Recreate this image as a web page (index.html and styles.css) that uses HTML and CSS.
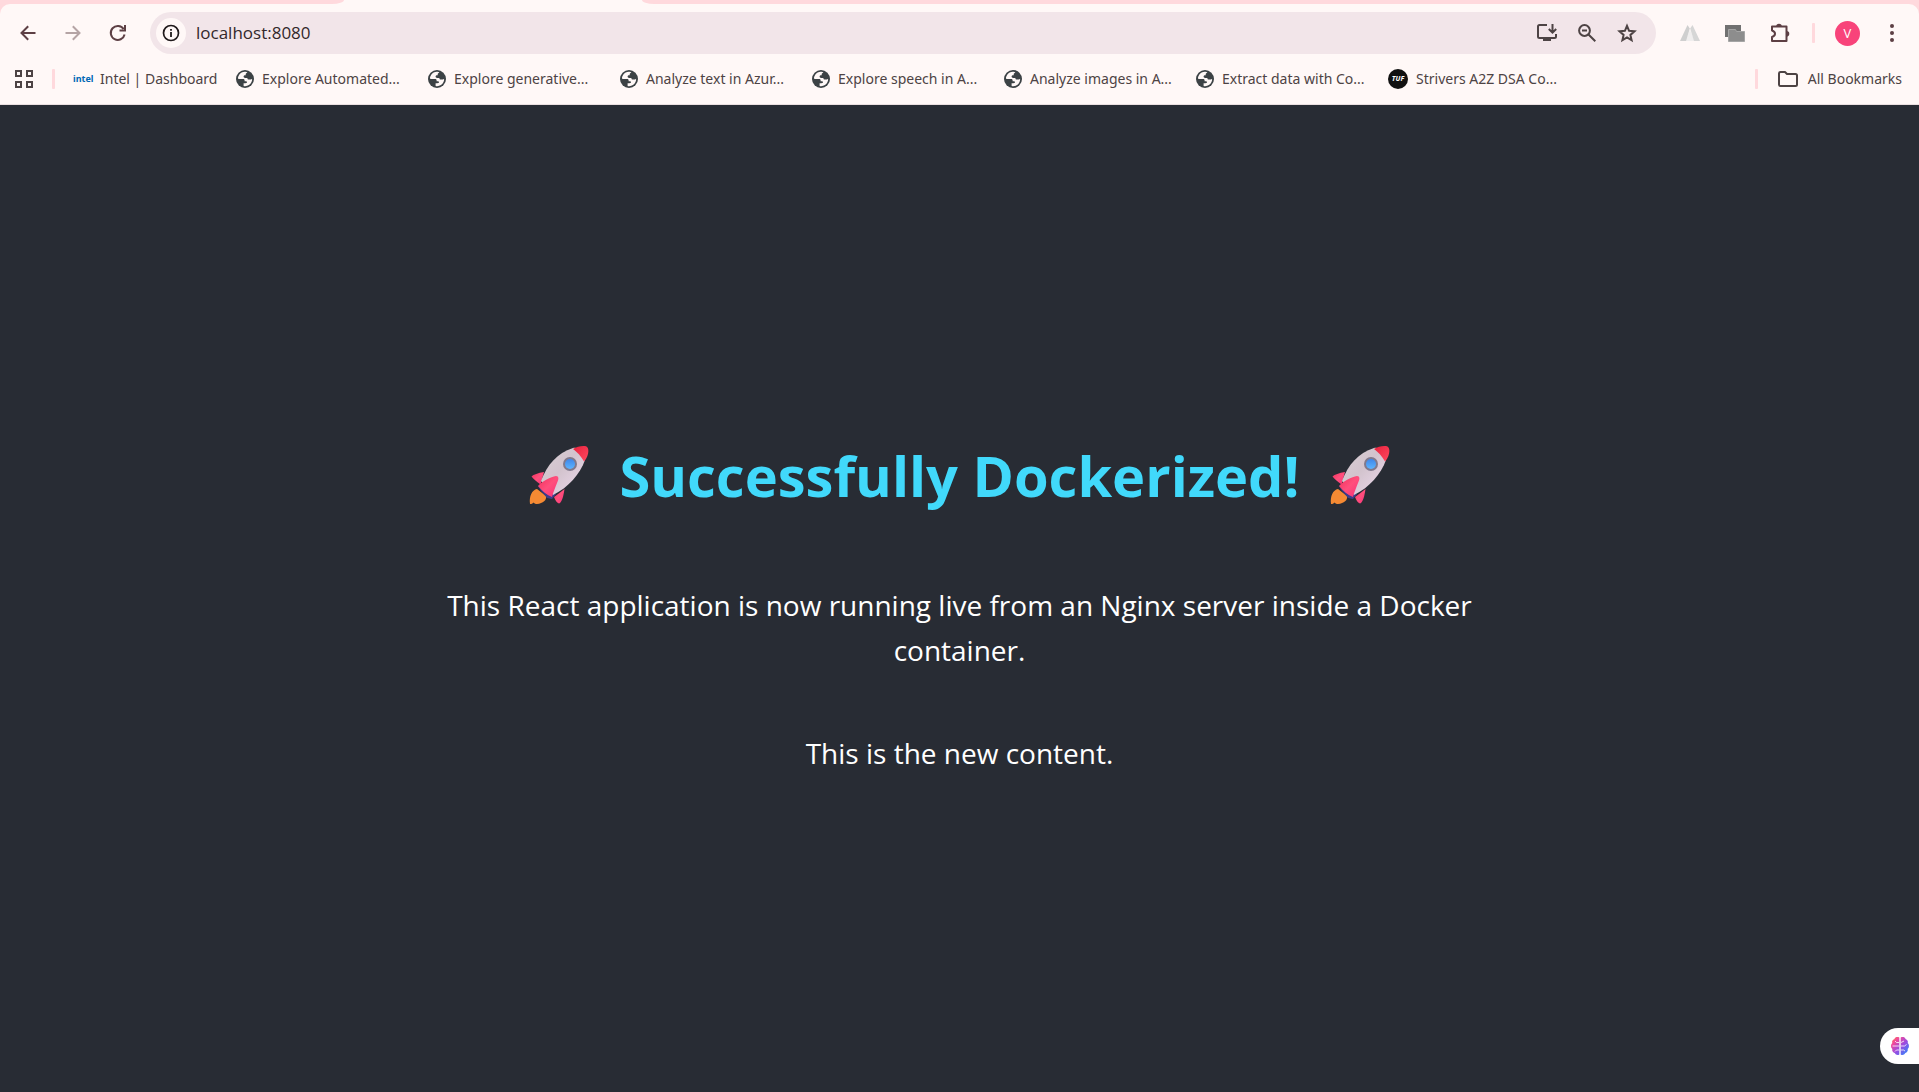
FILE: index.html
```html
<!DOCTYPE html>
<html lang="en">
<head>
<meta charset="utf-8">
<title>localhost:8080</title>
<meta name="viewport" content="width=device-width, initial-scale=1">
<link rel="stylesheet" href="styles.css">
</head>
<body>
<svg class="defs" width="0" height="0" aria-hidden="true">
  <defs>
    <linearGradient id="hull" x1="0" y1="0" x2="1" y2="1"><stop offset="0" stop-color="#d8d0d4"/><stop offset=".45" stop-color="#d2c3cd"/><stop offset="1" stop-color="#f0dcf0"/></linearGradient>
    <linearGradient id="fin" x1="0" y1="0" x2="1" y2="1"><stop offset="0" stop-color="#f0305c"/><stop offset=".5" stop-color="#ff4f7c"/><stop offset="1" stop-color="#f92f7a"/></linearGradient>
    <linearGradient id="nose" x1="0" y1="0" x2="1" y2="1"><stop offset="0" stop-color="#e8203c"/><stop offset="1" stop-color="#ff4a60"/></linearGradient>
    <linearGradient id="glass" x1="0" y1="0" x2="0" y2="1"><stop offset="0" stop-color="#3f86e8"/><stop offset="1" stop-color="#5db4ff"/></linearGradient>
    <linearGradient id="brain-fill" x1="0" y1="0" x2="1" y2="1"><stop offset="0" stop-color="#ff7a3c"/><stop offset=".25" stop-color="#f0489c"/><stop offset=".55" stop-color="#9a4be0"/><stop offset="1" stop-color="#1e90ff"/></linearGradient>
    <symbol id="globe" viewBox="0 0 18 18">
      <circle cx="9" cy="9" r="9" fill="#3c4245"/>
      <path fill="#fff8f7" d="M9.400 1.800C7 1.600 4.500 2.700 3.200 4.700L2.200 6.700c-.7 2 .1 2.300 1.800 2.300h3.200c.9 0 1.400.6 1.400 1.300v.9h1.500c.5 0 .8.300.8.800 0 .8-.7 1.200-1.500 1.200H7.600v2.800c3.300.7 6.600-.8 7.900-3.900.5-1.200.7-2.300.6-3.400-.8.900-1.900.9-3.100.9-1.200 0-1.600-.7-1.600-1.700H9.100c-.9 0-1.500-.5-1.500-1.300 0-1 .7-1.400 1.600-1.400h.5V4.200c0-.7.5-1.300 1.300-1.300h.4c-.4-.6-1.100-1-2-1.100z"/>
    </symbol>
    <symbol id="rocket" viewBox="0 0 60 60">
      <path fill="url(#fin)" d="M15 27C9 28 4.500 29.500 2.500 31.500c2 2.500 5.500 5.500 9 8z"/>
      <path fill="url(#fin)" d="M33 46l-8 6c1.500 3.500 3 6 5 6.500C33 57.500 34.500 51 35.500 44z"/>
      <path fill="#f58a33" d="M8 44c-5 1-8 7-7 15 2 0 3-.6 3.600-1.500.8 1 2 1.600 3.400 1.500C14 58.500 18 55 17 51z"/>
      <path fill="#3c3c8a" d="M9 41l3 5 6 7 5 1 4-5-12-11z"/>
      <path fill="url(#hull)" d="M12 36C18 20 28 8 44 3c5-1 12 3 12 12C51 29 40 42 24 50z"/>
      <path fill="url(#nose)" d="M44 4c4-2.500 10-3.500 13.500-2.500C60.500 3 60 11 55 16.500 52 11 48 7 44 4z"/>
      <circle cx="41" cy="19" r="7" fill="#80798c"/><circle cx="41" cy="19" r="5" fill="url(#glass)"/>
      <path fill="url(#fin)" d="M9 41c4-5 13-9 18-10 3 0 3 3 1 7-2 5-4 10-5 14-5-2-10-6-14-11z"/>
    </symbol>
  </defs>
</svg>

<header class="browser">
  <div class="tabstrip"><span class="tabs-before"></span><span class="tab-active"></span><span class="tabs-after"></span></div>
  <div class="chrome">
    <div class="toolbar">
      <nav class="history" aria-label="History">
        <button class="icon-btn" aria-label="Back"><svg width="16" height="16" viewBox="0 0 16 16"><path class="line" d="M15.500 8H2M8.200 1.300L1.500 8l6.700 6.700"/></svg></button>
        <button class="icon-btn faded" aria-label="Forward"><svg width="16" height="16" viewBox="0 0 16 16"><path class="line" d="M.5 8H14M7.800 1.300L14.500 8l-6.700 6.700"/></svg></button>
        <button class="icon-btn" aria-label="Reload"><svg width="18" height="18" viewBox="0 0 18 18"><path class="line" d="M15.600 10.500A7 7 0 1 1 14.600 5M10.500 6.500H16V1"/></svg></button>
      </nav>
      <div class="omnibox">
        <button class="site-info" aria-label="View site information"><svg width="18" height="18" viewBox="0 0 18 18"><circle cx="9" cy="9" r="7.500" fill="none" stroke="#201a1b" stroke-width="1.700"/><path fill="#201a1b" d="M8.100 8h1.800v5H8.100zM8.100 5h1.800v1.800H8.100z"/></svg></button>
        <input class="url" type="text" aria-label="Address" value="localhost:8080">
        <div class="omni-actions">
          <button class="icon-btn" aria-label="Install app"><svg width="22" height="20" viewBox="0 0 22 20"><path class="line dark" d="M11 2H3.500Q2 2 2 3.500v10Q2 15 3.500 15h15q1.500 0 1.500-1.500V11M16.500 1v8M12.800 6l3.700 3.700L20.200 6"/><path fill="#4d4344" d="M7 15h8v3H7z"/></svg></button>
          <button class="icon-btn" aria-label="Zoom"><svg width="18" height="18" viewBox="0 0 18 18"><circle class="line dark" cx="6.500" cy="6.500" r="5.400"/><path class="line dark" d="M10.500 10.500l6.800 6.800M4 6.500h5"/></svg></button>
          <button class="icon-btn" aria-label="Bookmark this tab"><svg width="20" height="20" viewBox="0 0 20 20"><path class="line dark" d="M10 2.800l2.100 5 5.400.5-4.100 3.600 1.200 5.300-4.600-2.800-4.600 2.800 1.200-5.300L2.500 8.300l5.400-.5z"/></svg></button>
        </div>
      </div>
      <div class="extensions">
        <button class="icon-btn" aria-label="Extension"><svg width="20" height="18" viewBox="0 0 20 18"><path fill="#f0eeee" d="M10 6l5 11H5z"/><path fill="#cfcfcf" d="M7.500 1l2.300 3.500L6 17H0z"/><path fill="#d6d6d6" d="M12.500 1l-2.300 3.500L14 17h6z"/></svg></button>
        <button class="icon-btn" aria-label="Extension"><svg width="20" height="18" viewBox="0 0 20 18"><path fill="#717171" d="M0 1h16v12H0z"/><path fill="#8d8d8d" stroke="#a5a5a5" d="M3.500 5.500h7l1 2h8v10h-16z"/></svg></button>
        <button class="icon-btn" aria-label="Extensions"><svg width="22" height="22" viewBox="0 0 22 22"><path class="line" d="M3 4.500h14.500V19H3v-4c4-1.300 4-5.200 0-6.500z" stroke-linejoin="round"/><path fill="#5d3f44" d="M7.200 4.500a2.800 2.800 0 0 1 5.600 0zM17.500 9a2.800 2.800 0 0 1 0 5.600z"/></svg></button>
      </div>
      <span class="divider"></span>
      <button class="avatar" aria-label="Profile">V</button>
      <button class="icon-btn" aria-label="Menu"><svg width="6" height="20" viewBox="0 0 6 20"><g fill="#5d3f44"><circle cx="3" cy="3" r="2"/><circle cx="3" cy="10" r="2"/><circle cx="3" cy="17" r="2"/></g></svg></button>
    </div>
    <nav class="bookmarks" aria-label="Bookmarks">
      <button class="icon-btn" aria-label="Apps"><svg width="18" height="18" viewBox="0 0 18 18"><path fill="none" stroke="#4d4344" stroke-width="2" d="M1 1h5v5H1zM12 1h5v5h-5zM1 12h5v5H1zM12 12h5v5h-5z"/></svg></button>
      <span class="divider"></span>
      <a class="bookmark short" href="#"><span class="intel">intel</span>Intel | Dashboard</a>
      <a class="bookmark" href="#"><svg width="18" height="18"><use href="#globe"/></svg>Explore Automated...</a>
      <a class="bookmark" href="#"><svg width="18" height="18"><use href="#globe"/></svg>Explore generative...</a>
      <a class="bookmark" href="#"><svg width="18" height="18"><use href="#globe"/></svg>Analyze text in Azur...</a>
      <a class="bookmark" href="#"><svg width="18" height="18"><use href="#globe"/></svg>Explore speech in A...</a>
      <a class="bookmark" href="#"><svg width="18" height="18"><use href="#globe"/></svg>Analyze images in A...</a>
      <a class="bookmark" href="#"><svg width="18" height="18"><use href="#globe"/></svg>Extract data with Co...</a>
      <a class="bookmark" href="#"><span class="tuf">TUF</span>Strivers A2Z DSA Co...</a>
      <span class="divider push"></span>
      <button class="all-bookmarks"><svg width="20" height="16" viewBox="0 0 20 16"><path class="line dark" stroke-linejoin="round" d="M1 13.500v-11Q1 1 2.500 1H7l2 2h8.500Q19 3 19 4.500v9q0 1.500-1.500 1.500h-15Q1 15 1 13.500z"/></svg>All Bookmarks</button>
    </nav>
  </div>
</header>

<main class="page">
  <h1 class="title"><svg class="rocket" role="img" aria-label="Rocket"><use href="#rocket"/></svg>Successfully Dockerized!<svg class="rocket" role="img" aria-label="Rocket"><use href="#rocket"/></svg></h1>
  <p class="copy">This React application is now running live from an Nginx server inside a Docker container.</p>
  <p class="copy">This is the new content.</p>
</main>

<button class="assistant" aria-label="Assistant"><svg width="20" height="20" viewBox="0 0 20 20"><path fill="url(#brain-fill)" d="M9.300 1.500C7.500.5 5 1 4.500 3 2.500 3.500 1.600 5.500 2.300 7 .6 8.500.6 11.500 2.300 13c-.5 2 .7 3.600 2.400 4 .9 2 3.200 2.400 4.600 1.400zM10.700 1.500c1.800-1 4.300-.5 4.800 1.500 2 .5 2.900 2.500 2.200 4 1.700 1.500 1.700 4.500 0 6 .5 2-.7 3.600-2.400 4-.9 2-3.200 2.400-4.600 1.400z"/><path fill="none" stroke="#fff" stroke-width=".8" d="M9 6.500H6.500L5 5M2.500 10H9M9 14H6.500L5 15.500M11 6.500l3-1.500M11 10h3.500l2-1.500M11 14h2.500l1.500 1"/></svg></button>
</body>
</html>
```
FILE: styles.css
```css
* { box-sizing: border-box; }

body {
  margin: 0;
  min-height: 100vh;
  display: flex;
  flex-direction: column;
  background: #282c34;
  font-family: "Open Sans", "Noto Sans", sans-serif;
}

button {
  padding: 0;
  border: 0;
  background: none;
  font: inherit;
  color: inherit;
  cursor: pointer;
}

svg { display: block; flex: none; }
.defs { position: absolute; }

.line { fill: none; stroke: #5d3f44; stroke-width: 2; }
.line.dark { stroke: #4d4344; }

/* Browser chrome */
.browser { background: #ffd9dd; }

.tabstrip { display: flex; height: 4px; background: #fff8f7; }
.tabs-before { width: 344px; background: #ffd9dd; border-bottom-right-radius: 12px 4px; }
.tab-active { width: 298px; }
.tabs-after { flex: 1; background: #ffd9dd; border-bottom-left-radius: 12px 4px; }

.chrome {
  background: #fff8f7;
  border-bottom: 1px solid #eadfe0;
  border-radius: 10px 10px 0 0;
}

.toolbar {
  display: flex;
  align-items: center;
  padding: 8px 12px 0 13px;
}

.icon-btn {
  display: grid;
  place-items: center;
  width: 30px;
  height: 30px;
  flex: none;
}

.faded { opacity: .45; }

.history { display: flex; gap: 15px; margin-right: 17px; }

.omnibox {
  flex: 1;
  display: flex;
  align-items: center;
  height: 42px;
  padding: 0 14px 0 6px;
  border-radius: 21px;
  background: #f2e5e9;
}

.site-info {
  display: grid;
  place-items: center;
  width: 30px;
  height: 30px;
  border-radius: 50%;
  background: #fff8f7;
}

.url {
  flex: 1;
  min-width: 0;
  padding: 0 10px;
  border: 0;
  outline: 0;
  background: none;
  font: 17px/24px "Open Sans", "Noto Sans", sans-serif;
  color: #33282b;
}

.omni-actions { display: flex; gap: 10px; }
.extensions { display: flex; gap: 15px; margin: 0 17px 0 19px; }

.divider {
  width: 3px;
  height: 20px;
  flex: none;
  border-radius: 1px;
  background: #ffd9dd;
}

.avatar {
  width: 25px;
  height: 25px;
  margin: 0 17px 0 20px;
  border-radius: 50%;
  background: #f8437a;
  color: #fff;
  font-size: 13px;
  line-height: 25px;
}

.bookmarks {
  display: flex;
  align-items: center;
  height: 50px;
  padding: 0 17px 0 9px;
  font-family: "Noto Sans", "Open Sans", sans-serif;
  font-size: 14px;
  line-height: 20px;
  color: #4d4344;
  white-space: nowrap;
}

.bookmarks .divider { margin-left: 13px; }
.bookmarks .push { margin-left: auto; }

.bookmark {
  display: flex;
  align-items: center;
  gap: 8px;
  width: 192px;
  color: inherit;
  text-decoration: none;
}

.bookmark.short { width: 163px; margin-left: 18px; }

.intel {
  width: 19px;
  color: #0068b5;
  font-size: 9px;
  font-weight: 700;
}

.tuf {
  width: 20px;
  height: 20px;
  border-radius: 50%;
  background: #111;
  color: #fff;
  font-size: 7px;
  font-weight: 700;
  font-style: italic;
  text-align: center;
}

.all-bookmarks {
  display: flex;
  align-items: center;
  gap: 10px;
  margin-left: 20px;
}

/* Page */
.page {
  flex: 1;
  display: flex;
  flex-direction: column;
  align-items: center;
  justify-content: center;
  padding: 10px 20px 0;
  color: #fff;
  text-align: center;
}

.title {
  display: flex;
  align-items: center;
  gap: 30px;
  margin: 0 0 64px;
  color: #41d9fb;
  font-size: 56px;
  line-height: 88px;
  font-weight: 700;
}

.rocket { width: 60px; height: 60px; }

.copy {
  max-width: 1060px;
  margin: 0;
  font-size: 28px;
  line-height: 45px;
}

.copy + .copy { margin-top: 58px; }

.assistant {
  position: fixed;
  right: 0;
  bottom: 28px;
  width: 39px;
  height: 36px;
  padding-left: 10px;
  border-radius: 18px 0 0 18px;
  background: #fff;
}
```
